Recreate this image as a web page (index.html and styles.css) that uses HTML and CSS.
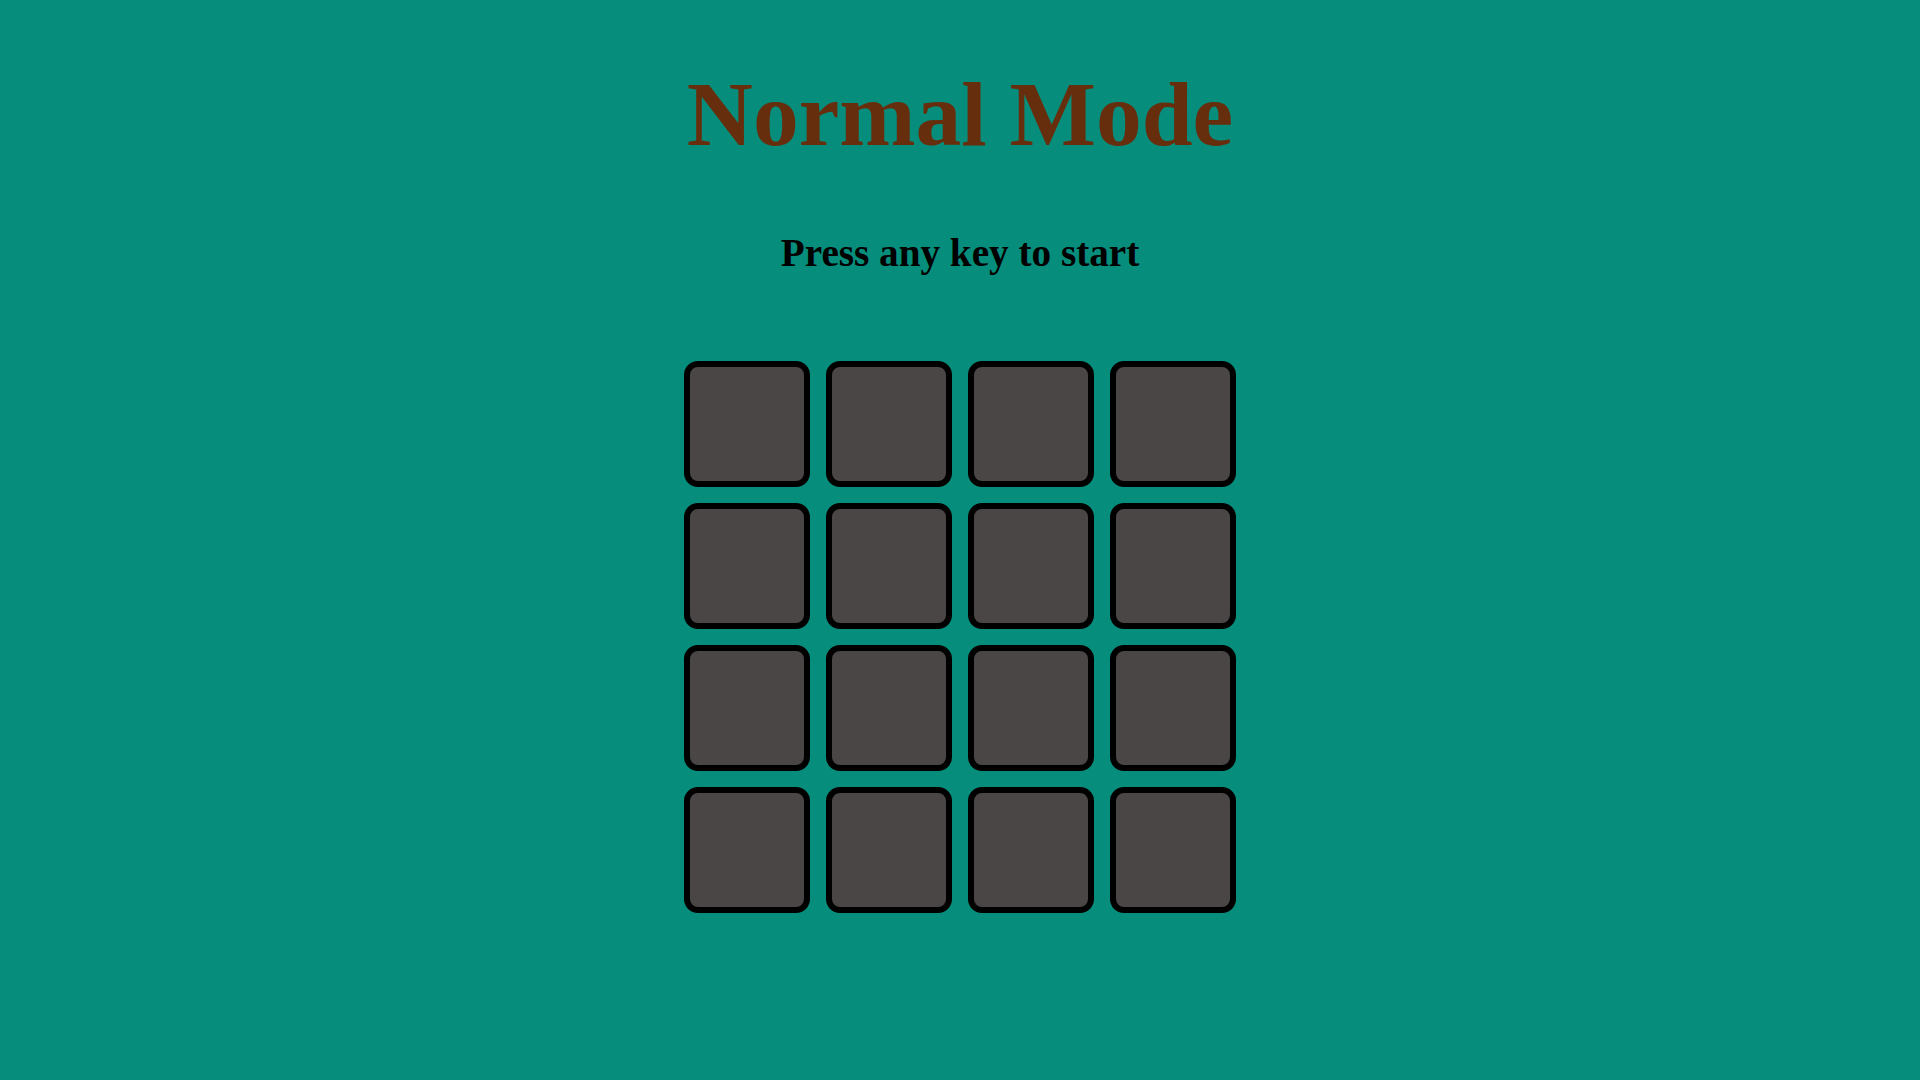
FILE: index.html
```html
<!DOCTYPE html>
<html lang="en">
<head>
<meta charset="utf-8">
<title>Normal Mode</title>
<link rel="stylesheet" href="styles.css">
</head>
<body>
<main class="game">
  <h1 class="title">Normal Mode</h1>
  <p class="subtitle">Press any key to start</p>
  <div class="board">
    <div class="tile"></div><div class="tile"></div><div class="tile"></div><div class="tile"></div>
    <div class="tile"></div><div class="tile"></div><div class="tile"></div><div class="tile"></div>
    <div class="tile"></div><div class="tile"></div><div class="tile"></div><div class="tile"></div>
    <div class="tile"></div><div class="tile"></div><div class="tile"></div><div class="tile"></div>
  </div>
</main>
</body>
</html>
```

FILE: styles.css
```css
html, body {
  margin: 0;
  padding: 0;
  height: 100%;
}
body {
  background: #068d7b;
  font-family: "Liberation Serif", "Times New Roman", serif;
  overflow: hidden;
}
.game {
  display: flex;
  flex-direction: column;
  align-items: center;
}
.title {
  margin: 62px 0 0;
  font-size: 91.5px;
  line-height: 105px;
  font-weight: bold;
  color: #672e0e;
}
.subtitle {
  margin: 63px 0 0;
  font-size: 39.2px;
  line-height: 45px;
  font-weight: bold;
  color: #000;
}
.board {
  margin-top: 86px;
  display: grid;
  grid-template-columns: repeat(4, 126px);
  grid-auto-rows: 126px;
  gap: 16px;
}
.tile {
  box-sizing: border-box;
  background: #4a4646;
  border: 6px solid #000;
  border-radius: 14px;
}
```
